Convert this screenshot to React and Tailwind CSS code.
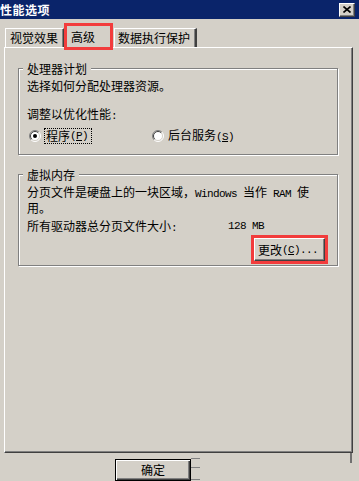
import React from 'react';

const latin = "font-['Liberation_Mono'] text-[11px] tracking-[-0.6px]";

const Radio = ({ checked }) => (
  <svg width="12" height="12" viewBox="0 0 12 12" className="shrink-0">
    <circle cx="6" cy="6" r="5" fill="#fff" />
    <path d="M2.1 9.9 A5.5 5.5 0 0 1 9.9 2.1" fill="none" stroke="#808080" strokeWidth="1" />
    <path d="M9.9 2.1 A5.5 5.5 0 0 1 2.1 9.9" fill="none" stroke="#fff" strokeWidth="1" />
    <path d="M2.8 9.2 A4.5 4.5 0 0 1 9.2 2.8" fill="none" stroke="#404040" strokeWidth="1" />
    <path d="M9.2 2.8 A4.5 4.5 0 0 1 2.8 9.2" fill="none" stroke="#d4d0c8" strokeWidth="1" />
    {checked && <circle cx="6" cy="6" r="2" fill="#000" />}
  </svg>
);

const GroupBox = ({ title, className, children }) => (
  <div className={`relative w-[320px] border border-[#808080] shadow-[inset_1px_1px_0_#fff,1px_1px_0_#fff] ${className}`}>
    <span className="absolute left-[4px] -top-[6px] px-[4px] bg-[#d4d0c8] leading-[12px]">{title}</span>
    {children}
  </div>
);

export default function App() {
  return (
    <div className="w-[359px] h-[481px] overflow-hidden bg-[#d4d0c8] text-black text-[12px] leading-[12px] font-['Noto_Sans_CJK_SC',sans-serif]">
      {/* Title bar */}
      <div className="h-[19px] bg-[#0a246a] flex items-center justify-between">
        <span className="text-white font-bold text-[12px] leading-[13px] tracking-[0.5px]">性能选项</span>
        <div className="mr-[4px] w-[16px] h-[14px] flex items-center justify-center bg-[#d4d0c8] border-t border-l border-white border-r border-b border-r-[#404040] border-b-[#404040] shadow-[inset_-1px_-1px_0_#808080]">
          <svg width="8" height="7" viewBox="0 0 8 7">
            <path d="M0.5 0.5 L7.5 6.5 M7.5 0.5 L0.5 6.5" stroke="#000" strokeWidth="1.6" />
          </svg>
        </div>
      </div>

      {/* Tabs */}
      <div className="mt-[4px] h-[24px] flex items-end">
        <div className="ml-[5px] w-[59px] h-[19px] pl-[4px] flex items-center border-t border-l border-white border-r border-r-[#404040] shadow-[inset_-1px_0_0_#808080]">
          视觉效果
        </div>
        <div className="relative z-10 w-[49px] h-[27px] -mb-[3px] pl-[4px] pt-[5px] bg-[#d4d0c8] border-[3px] border-[#f23c3c]">
          高级
        </div>
        <div className="ml-[1px] w-[83px] h-[19px] pl-[3px] flex items-center border-t border-l border-white border-r-2 border-r-[#404040] shadow-[inset_-1px_0_0_#808080]">
          数据执行保护
        </div>
      </div>

      {/* Tab panel */}
      <div className="ml-[4px] w-[349px] h-[406px] pt-[20px] pl-[13px] border-t border-l border-white border-r border-b border-r-[#404040] border-b-[#404040] shadow-[inset_-1px_-1px_0_#808080]">
        <GroupBox title="处理器计划" className="h-[87px] pt-[11px] pl-[8px]">
          <p>选择如何分配处理器资源。</p>
          <p className="mt-[16px]">调整以优化性能<span className={latin}>:</span></p>
          <div className="mt-[6px] h-[16px] flex items-center ml-[2px]">
            <div className="w-[123px] flex items-center gap-[3px]">
              <Radio checked />
              <span className="h-[16px] flex items-center pl-[1px] pr-[3px] border border-dotted border-black">
                程序<span className={latin}>(<u>P</u>)</span>
              </span>
            </div>
            <div className="flex items-center gap-[4px]">
              <Radio />
              <span>
                后台服务<span className={latin}>(<u>S</u>)</span>
              </span>
            </div>
          </div>
        </GroupBox>

        <GroupBox title="虚拟内存" className="mt-[19px] h-[92px] pt-[10px] pl-[8px]">
          <p className="leading-[13px]">
            <span className="whitespace-nowrap">
              分页文件是硬盘上的一块区域，<span className={latin}>Windows </span>当作<span className={latin}> RAM </span>使
            </span>
            <br />
            用。
          </p>
          <div className="mt-[6px] flex">
            <span className="w-[201px]">所有驱动器总分页文件大小<span className={latin}>:</span></span>
            <span className={latin}>128 MB</span>
          </div>
          <div className="mt-[4px] flex justify-end pr-[12px]">
            <button className="w-[71px] h-[23px] pl-[3px] flex items-center bg-[#d4d0c8] border-t border-l border-white border-r border-b border-r-[#404040] border-b-[#404040] shadow-[inset_-1px_-1px_0_#808080] outline-[3px] outline-solid outline-[#f23c3c]">
              更改<span className={latin}>(<u>C</u>)...</span>
            </button>
          </div>
        </GroupBox>
      </div>

      {/* Bottom buttons */}
      <div className="flex items-start">
        <button className="ml-[115px] mt-[6px] w-[76px] h-[22px] flex items-center justify-center bg-[#d4d0c8] border border-black shadow-[inset_1px_1px_0_#fff,inset_-1px_-1px_0_#404040,inset_-2px_-2px_0_#808080]">
          确定
        </button>
        <div className="mt-[5px] w-[9px] flex flex-col">
          <div className="h-px bg-[#808080]" />
          <div className="mt-[8px] h-px bg-[#808080]" />
          <div className="mt-[11px] h-px bg-[#808080]" />
        </div>
        <div className="ml-auto mr-[7px] w-[2px] h-[10px] bg-[#707070]" />
      </div>
    </div>
  );
}
